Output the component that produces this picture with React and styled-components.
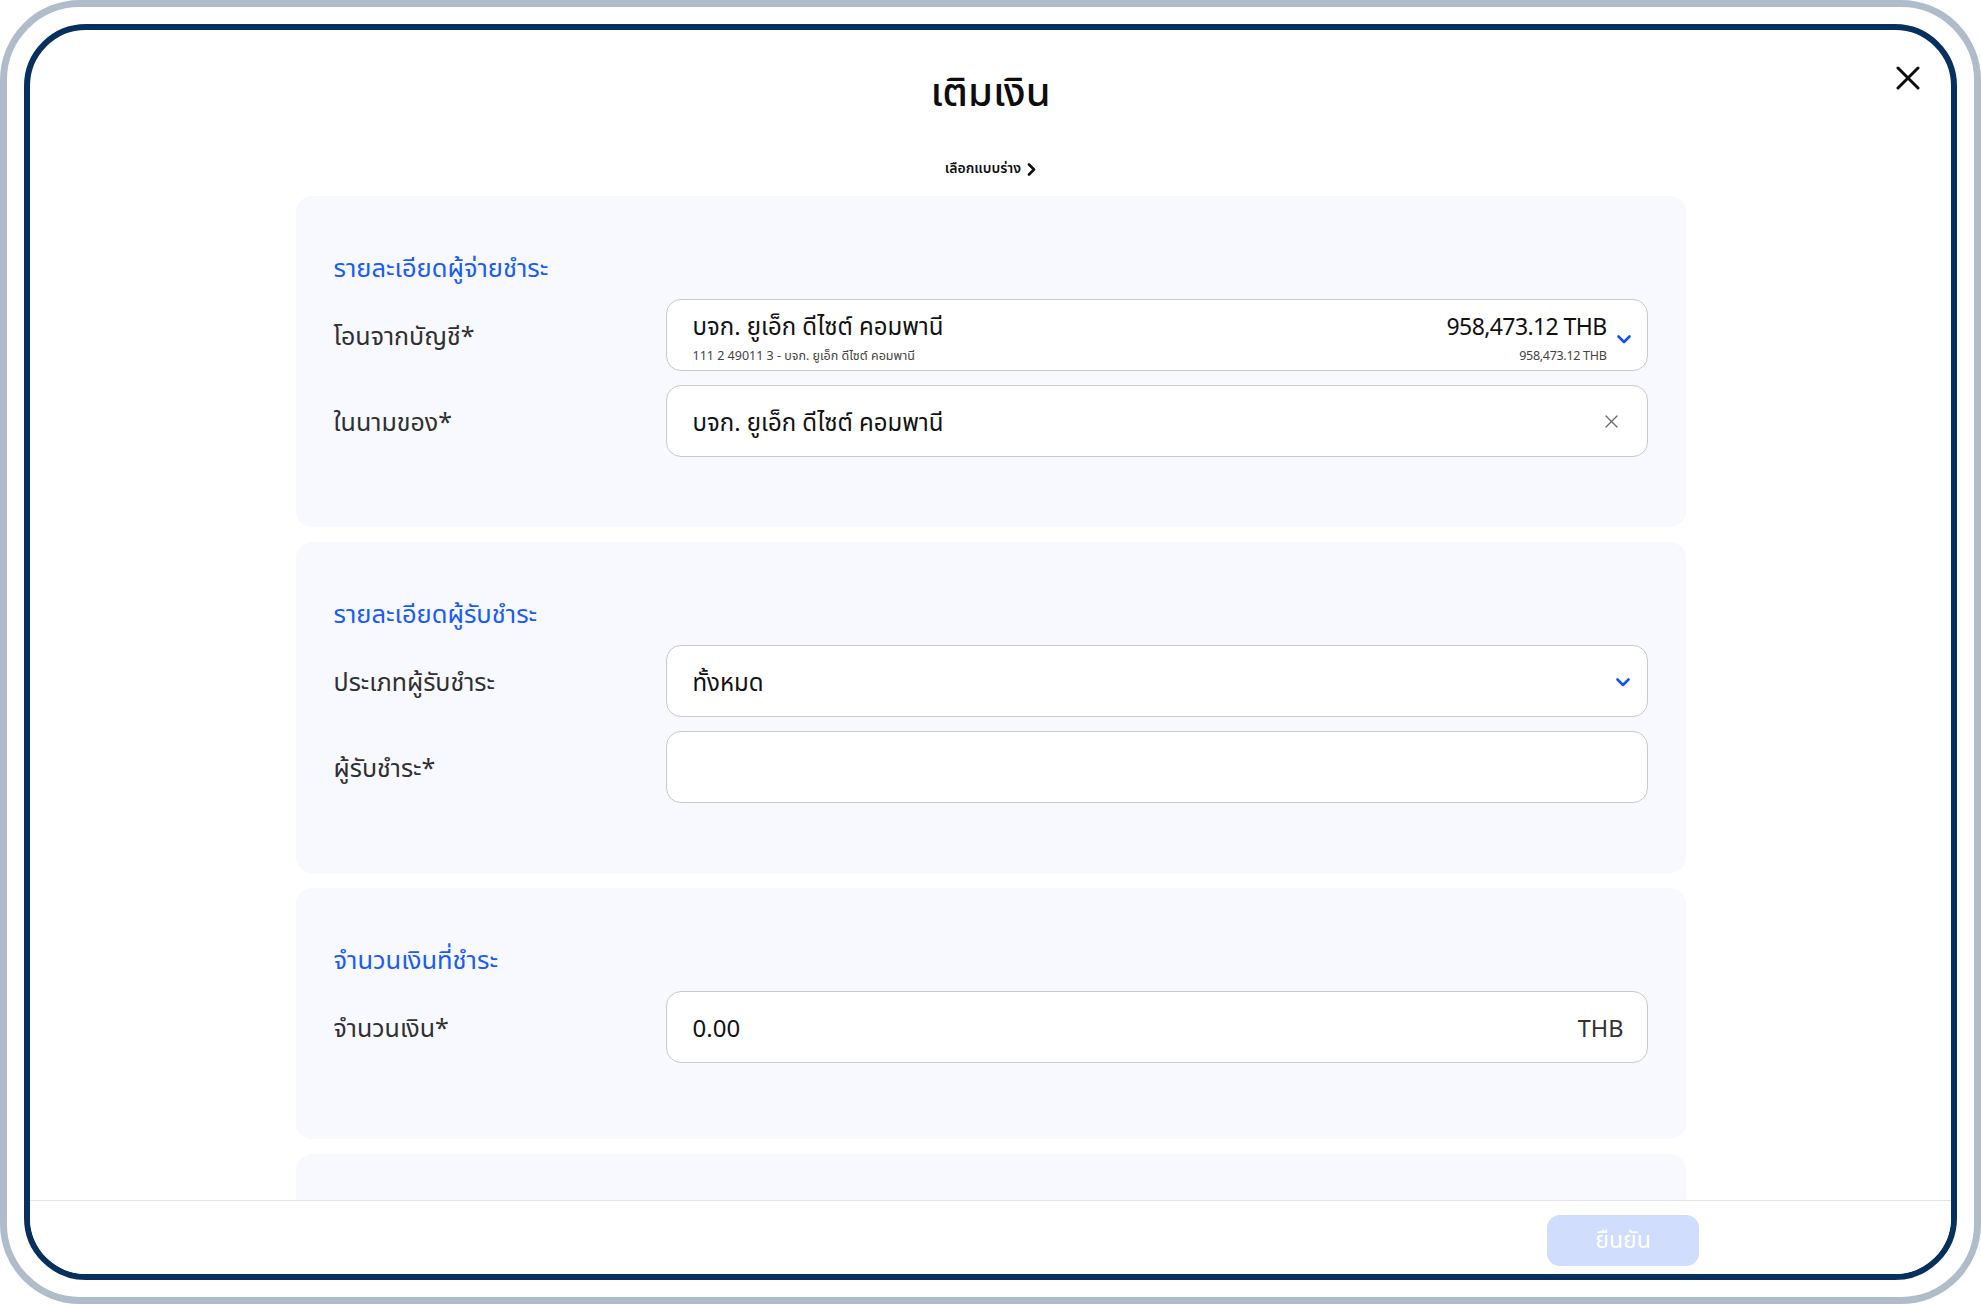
import React from "react";
import styled, { createGlobalStyle } from "styled-components";

const GlobalStyle = createGlobalStyle`
  html, body { margin: 0; padding: 0; background: #ffffff; }
  body {
    font-family: "Noto Sans Thai", "Noto Sans", "Liberation Sans", sans-serif;
    color: #111111;
  }
  * { box-sizing: border-box; }
`;

const Frame = styled.div`
  width: 1981px;
  height: 1304px;
  border: 7px solid #b1bccb;
  border-radius: 80px;
  padding: 17px;
  background: #ffffff;
`;

const Screen = styled.div`
  position: relative;
  height: 100%;
  border: 6px solid #07305f;
  border-radius: 62px;
  overflow: hidden;
  display: flex;
  flex-direction: column;
  background: #ffffff;
`;

const Header = styled.header`
  display: flex;
  flex-direction: column;
  align-items: center;
  padding-top: 36px;
`;

const Title = styled.h1`
  margin: 0;
  font-size: 40px;
  line-height: 56px;
  font-weight: 500;
  color: #0d0d0d;
`;

const DraftLink = styled.button`
  margin-top: 37px;
  display: flex;
  align-items: center;
  gap: 6px;
  border: 0;
  background: none;
  padding: 0;
  font-family: inherit;
  font-size: 14px;
  line-height: 20px;
  font-weight: 600;
  color: #111111;
  cursor: pointer;
`;

const CloseButton = styled.button`
  position: absolute;
  top: 36px;
  right: 31px;
  width: 24px;
  height: 24px;
  padding: 0;
  border: 0;
  background: none;
  display: flex;
  cursor: pointer;
`;

const Body = styled.main`
  flex: 1;
  overflow: hidden;
  display: flex;
  flex-direction: column;
  align-items: center;
  gap: 15px;
  padding-top: 17px;
`;

const Card = styled.section`
  flex-shrink: 0;
  width: 1390px;
  min-height: ${(p) => p.$minH || 0}px;
  background: #f7f9ff;
  border-radius: 16px;
  padding: 56px 38px ${(p) => p.$pb ?? 70}px 38px;
  display: flex;
  flex-direction: column;
  gap: 14px;
`;

const SectionTitle = styled.h2`
  margin: 0 0 -1px 0;
  font-size: 25.5px;
  line-height: 34px;
  font-weight: 400;
  color: #1a5cf7;
`;

const Row = styled.div`
  display: grid;
  grid-template-columns: 332px 1fr;
  align-items: center;
`;

const Label = styled.label`
  padding-top: 4px;
  font-size: 25px;
  line-height: 34px;
  color: #303030;
`;

const Field = styled.div`
  height: 72px;
  background: #ffffff;
  border: 1.5px solid #c9c9c9;
  border-radius: 15px;
  display: flex;
  align-items: center;
  padding: ${(p) => p.$pt ?? 5}px ${(p) => p.$pr ?? 26}px 0 26px;
  gap: ${(p) => p.$gap ?? 11}px;
`;

const Grow = styled.div`
  flex: ${(p) => (p.$end ? "0 0 auto" : "1")};
  min-width: 0;
  display: flex;
  flex-direction: column;
  align-items: ${(p) => (p.$end ? "flex-end" : "flex-start")};
`;

const ValueText = styled.span`
  font-size: 24px;
  line-height: 30px;
  color: #111111;
  white-space: nowrap;
`;

const SubText = styled.span`
  margin-top: 5px;
  font-size: 12.5px;
  line-height: 18px;
  color: #444444;
  white-space: nowrap;
`;

const Amount = styled.span`
  font-size: 23px;
  line-height: 30px;
  letter-spacing: -0.6px;
  color: #111111;
  white-space: nowrap;
`;

const SubAmount = styled.span`
  margin-top: 5px;
  font-size: 12.5px;
  line-height: 18px;
  letter-spacing: -0.3px;
  color: #444444;
  white-space: nowrap;
`;

const Suffix = styled.span`
  font-size: 23.5px;
  line-height: 30px;
  color: #333333;
`;

const IconSlot = styled.span`
  display: flex;
  align-items: center;
  justify-content: center;
  flex-shrink: 0;
  margin-top: ${(p) => p.$mt || 0}px;
`;

const Footer = styled.footer`
  height: 74px;
  flex-shrink: 0;
  border-top: 1px solid #e4e4e6;
  display: flex;
  align-items: flex-start;
  justify-content: flex-end;
  padding: 14px 252px 0 0;
  background: #ffffff;
`;

const ConfirmButton = styled.button`
  width: 152px;
  height: 51px;
  border: 0;
  border-radius: 13px;
  background: #d0ddfd;
  color: #ffffff;
  font-family: inherit;
  font-size: 23px;
  line-height: 30px;
  padding-top: 2px;
  cursor: not-allowed;
`;

const Chevron = () => (
  <svg width="14" height="9" viewBox="0 0 14 9" fill="none">
    <path d="M1.5 1.5 L7 7 L12.5 1.5" stroke="#1652f0" strokeWidth="2.6" strokeLinecap="round" strokeLinejoin="round" />
  </svg>
);

const ClearIcon = () => (
  <svg width="13" height="13" viewBox="0 0 13 13" fill="none">
    <path d="M1 1 L12 12 M12 1 L1 12" stroke="#6a6a6a" strokeWidth="1.4" strokeLinecap="round" />
  </svg>
);

const CloseIcon = () => (
  <svg width="24" height="24" viewBox="0 0 24 24" fill="none">
    <path d="M2 2 L22 22 M22 2 L2 22" stroke="#0d0d0d" strokeWidth="3" strokeLinecap="round" />
  </svg>
);

const SmallChevron = () => (
  <svg width="9" height="13" viewBox="0 0 9 13" fill="none">
    <path d="M2 1.5 L7 6.5 L2 11.5" stroke="#111" strokeWidth="2.6" strokeLinecap="round" strokeLinejoin="round" />
  </svg>
);

export default function App() {
  return (
    <>
      <GlobalStyle />
      <Frame>
        <Screen>
          <Header>
            <Title>เติมเงิน</Title>
            <DraftLink>
              เลือกแบบร่าง
              <SmallChevron />
            </DraftLink>
          </Header>
          <CloseButton aria-label="close">
            <CloseIcon />
          </CloseButton>

          <Body>
            <Card>
              <SectionTitle>รายละเอียดผู้จ่ายชำระ</SectionTitle>
              <Row>
                <Label>โอนจากบัญชี*</Label>
                <Field $pt={9} $pr={16} $gap={10}>
                  <Grow>
                    <ValueText>บจก. ยูเอ็ก ดีไซต์ คอมพานี</ValueText>
                    <SubText>111 2 49011 3 - บจก. ยูเอ็ก ดีไซต์ คอมพานี</SubText>
                  </Grow>
                  <Grow $end>
                    <Amount>958,473.12 THB</Amount>
                    <SubAmount>958,473.12 THB</SubAmount>
                  </Grow>
                  <IconSlot>
                    <Chevron />
                  </IconSlot>
                </Field>
              </Row>
              <Row>
                <Label>ในนามของ*</Label>
                <Field $pr={29}>
                  <Grow>
                    <ValueText>บจก. ยูเอ็ก ดีไซต์ คอมพานี</ValueText>
                  </Grow>
                  <IconSlot $mt={-4}>
                    <ClearIcon />
                  </IconSlot>
                </Field>
              </Row>
            </Card>

            <Card>
              <SectionTitle>รายละเอียดผู้รับชำระ</SectionTitle>
              <Row>
                <Label>ประเภทผู้รับชำระ</Label>
                <Field $pr={17}>
                  <Grow>
                    <ValueText>ทั้งหมด</ValueText>
                  </Grow>
                  <IconSlot $mt={-3}>
                    <Chevron />
                  </IconSlot>
                </Field>
              </Row>
              <Row>
                <Label>ผู้รับชำระ*</Label>
                <Field />
              </Row>
            </Card>

            <Card $pb={76}>
              <SectionTitle>จำนวนเงินที่ชำระ</SectionTitle>
              <Row>
                <Label>จำนวนเงิน*</Label>
                <Field $pr={23}>
                  <Grow>
                    <ValueText>0.00</ValueText>
                  </Grow>
                  <Suffix>THB</Suffix>
                </Field>
              </Row>
            </Card>

            <Card $minH={200} />
          </Body>

          <Footer>
            <ConfirmButton disabled>ยืนยัน</ConfirmButton>
          </Footer>
        </Screen>
      </Frame>
    </>
  );
}
